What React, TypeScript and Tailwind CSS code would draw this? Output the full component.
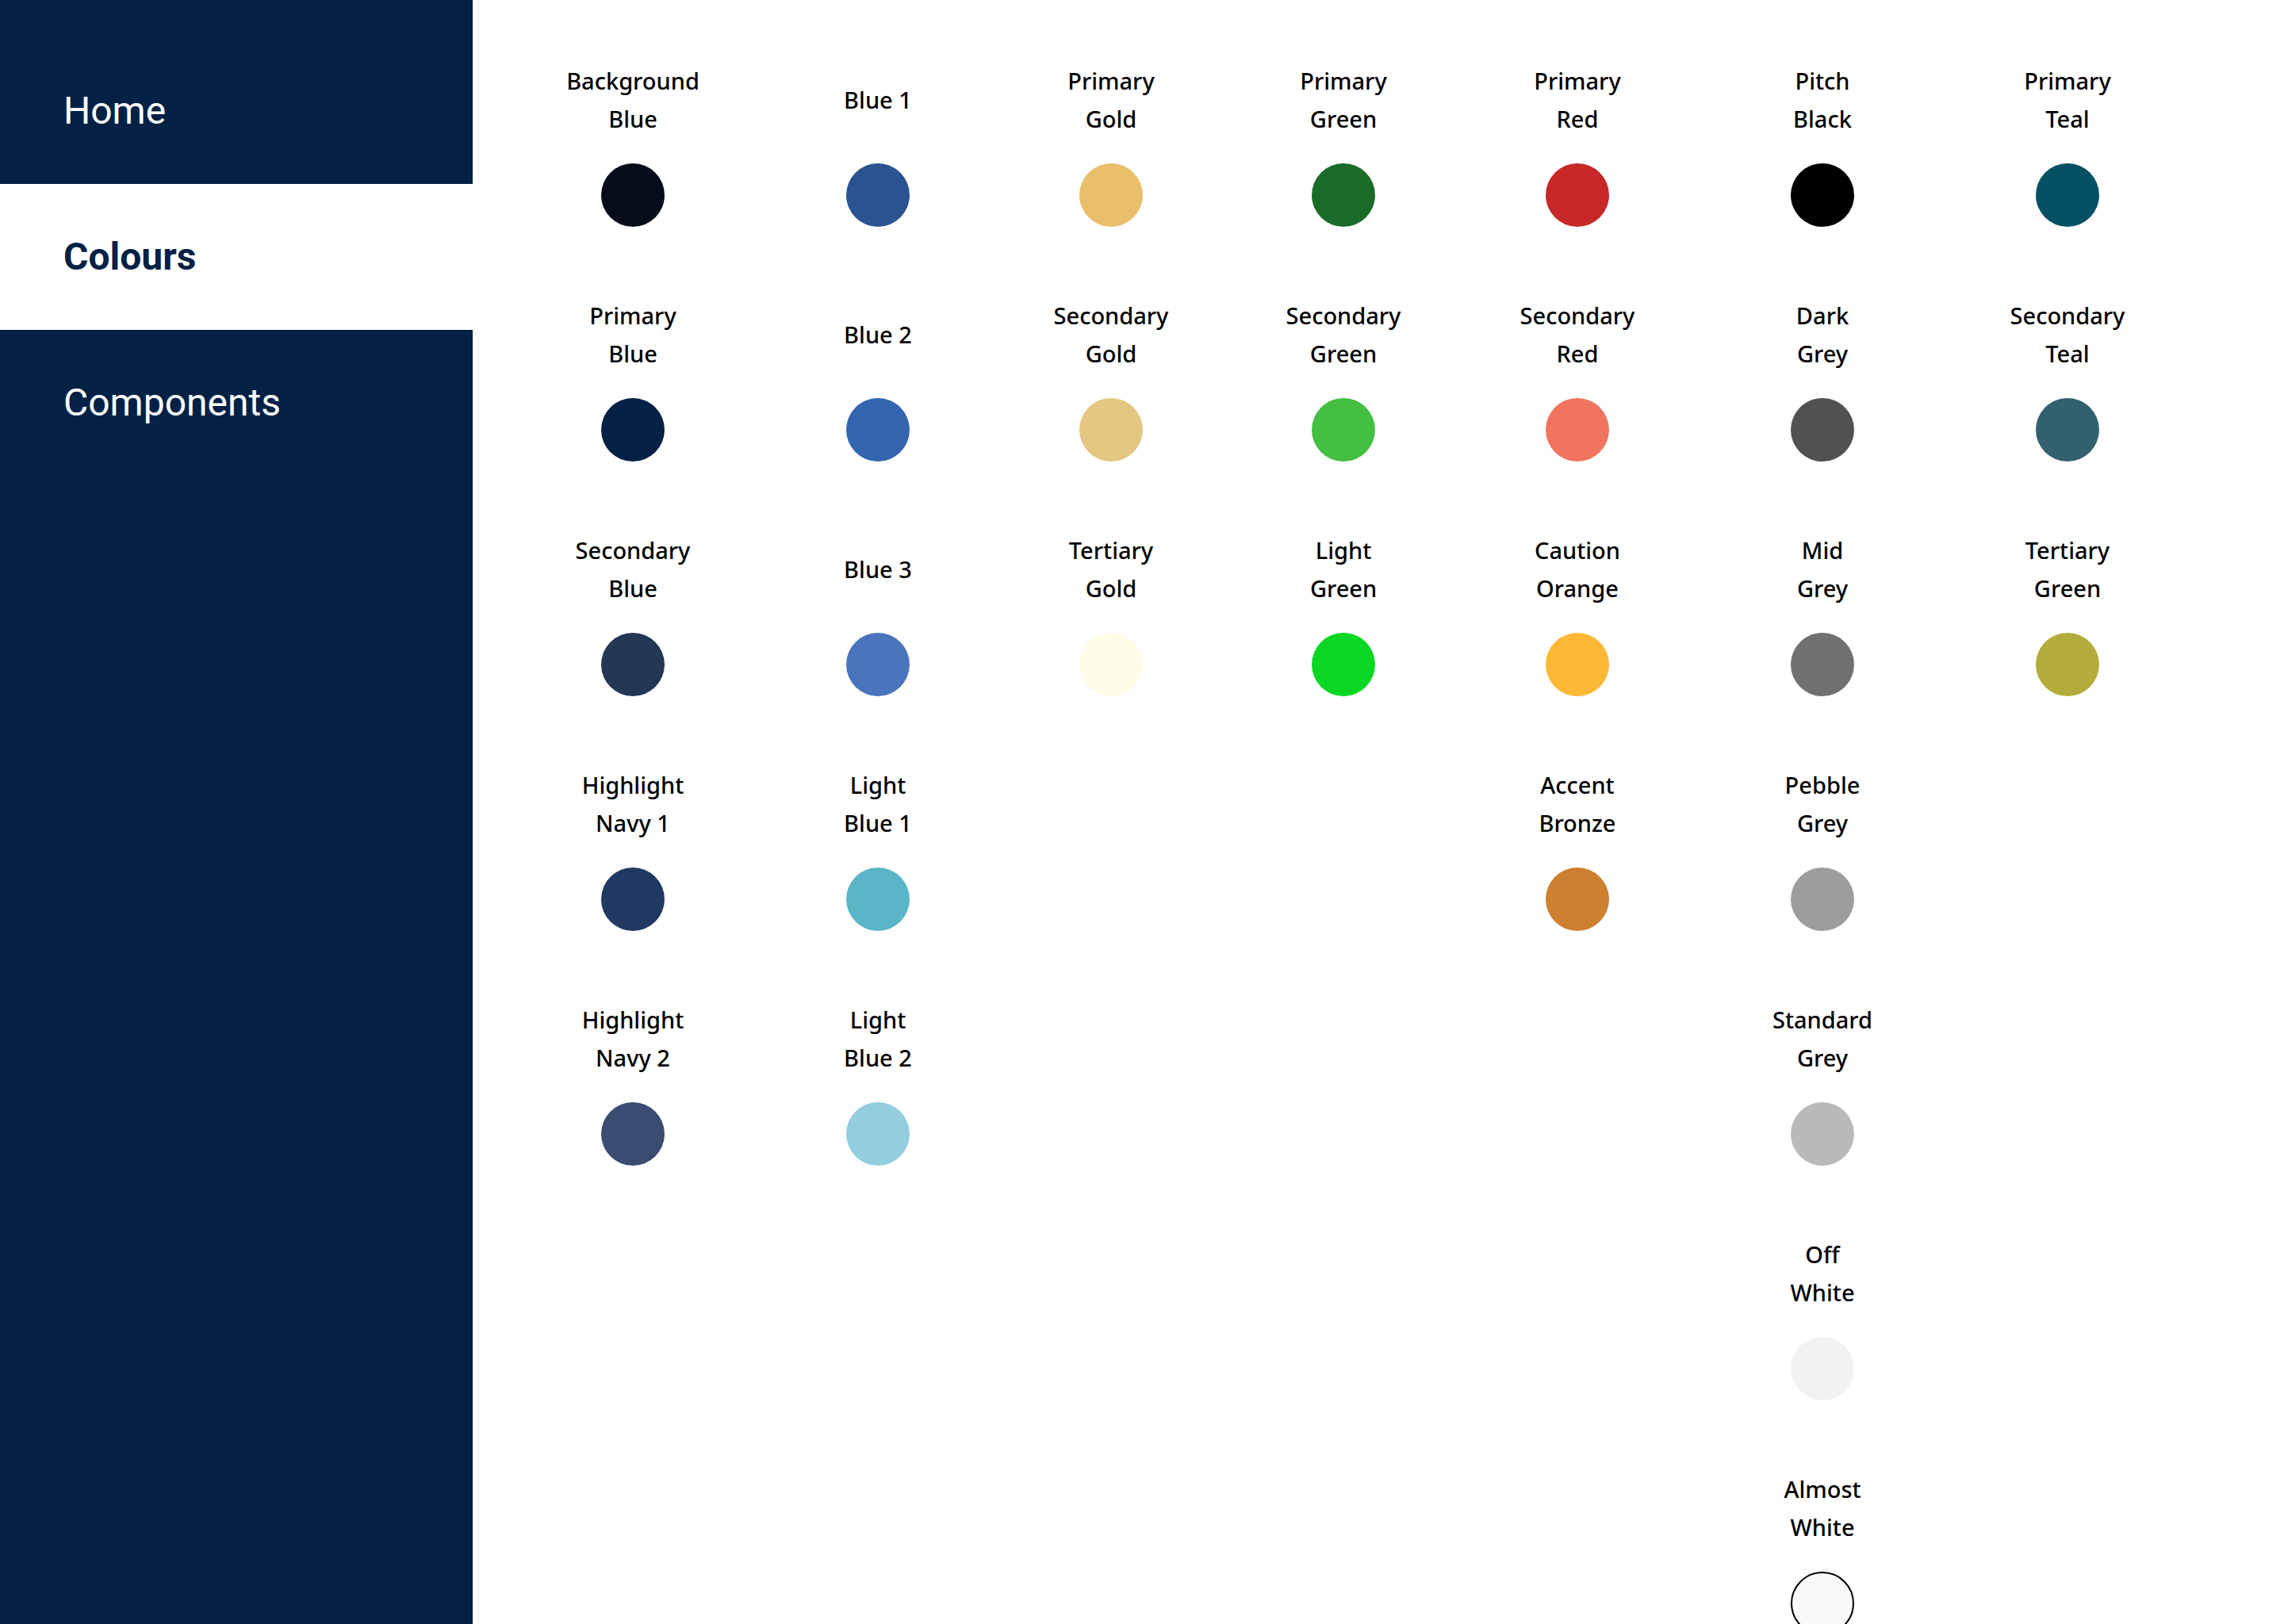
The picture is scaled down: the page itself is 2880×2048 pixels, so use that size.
type Swatch = { name: string; lines: string[]; fill: string };

const s = (first: string, second: string, fill: string): Swatch => ({
  name: `${first} ${second}`.trim(),
  lines: second ? [first, second] : [first],
  fill,
});

const columns: Swatch[][] = [
  [
    s('Background', 'Blue', 'bg-[#060d18]'),
    s('Primary', 'Blue', 'bg-[#022145]'),
    s('Secondary', 'Blue', 'bg-[#233755]'),
    s('Highlight', 'Navy 1', 'bg-[#1f3963]'),
    s('Highlight', 'Navy 2', 'bg-[#3b4c72]'),
  ],
  [
    s('Blue 1', '', 'bg-[#2a5390]'),
    s('Blue 2', '', 'bg-[#3364af]'),
    s('Blue 3', '', 'bg-[#4a74bc]'),
    s('Light', 'Blue 1', 'bg-[#5ab5c7]'),
    s('Light', 'Blue 2', 'bg-[#92cede]'),
  ],
  [
    s('Primary', 'Gold', 'bg-[#e8bf6a]'),
    s('Secondary', 'Gold', 'bg-[#e5c682]'),
    s('Tertiary', 'Gold', 'bg-[#fffce8]'),
  ],
  [
    s('Primary', 'Green', 'bg-[#1a6a29]'),
    s('Secondary', 'Green', 'bg-[#43bf41]'),
    s('Light', 'Green', 'bg-[#09d723]'),
  ],
  [
    s('Primary', 'Red', 'bg-[#c62828]'),
    s('Secondary', 'Red', 'bg-[#f1755e]'),
    s('Caution', 'Orange', 'bg-[#ffb835]'),
    s('Accent', 'Bronze', 'bg-[#cc8030]'),
  ],
  [
    s('Pitch', 'Black', 'bg-black'),
    s('Dark', 'Grey', 'bg-[#505152]'),
    s('Mid', 'Grey', 'bg-[#707070]'),
    s('Pebble', 'Grey', 'bg-[#9c9d9f]'),
    s('Standard', 'Grey', 'bg-[#bababa]'),
    s('Off', 'White', 'bg-[#f2f2f2]'),
    s('Almost', 'White', 'bg-[#f9f9f9] border-2 border-black'),
  ],
  [
    s('Primary', 'Teal', 'bg-[#065063]'),
    s('Secondary', 'Teal', 'bg-[#33606f]'),
    s('Tertiary', 'Green', 'bg-[#b2ad3a]'),
  ],
];

const links = [
  { label: 'Home', active: false },
  { label: 'Colours', active: true },
  { label: 'Components', active: false },
];

function Sidebar() {
  return (
    <nav className="w-[596px] shrink-0 bg-[#022145] pt-12 font-['Roboto',sans-serif] text-5xl">
      <ul>
        {links.map(({ label, active }) => (
          <li key={label}>
            <a
              href={`#${label.toLowerCase()}`}
              aria-current={active ? 'page' : undefined}
              className={
                active
                  ? 'flex h-46 items-center bg-white px-20 font-bold text-[#022145]'
                  : 'flex h-46 items-center px-20 text-white'
              }
            >
              {label}
            </a>
          </li>
        ))}
      </ul>
    </nav>
  );
}

function ColourSwatch({ swatch }: { swatch: Swatch }) {
  return (
    <li className="flex flex-col items-center gap-8">
      <p className="flex h-24 flex-col justify-center text-center">
        {swatch.lines.map((line) => (
          <span key={line} className="block">
            {line}
          </span>
        ))}
      </p>
      <div role="img" aria-label={swatch.name} className={`size-20 rounded-full ${swatch.fill}`} />
    </li>
  );
}

export default function App() {
  return (
    <div className="flex h-screen overflow-hidden bg-white">
      <Sidebar />
      <main className="grid min-w-0 flex-1 grid-cols-[322fr_296fr_292fr_294fr_296fr_322fr_296fr] overflow-y-auto pt-[78px] pr-[125px] pl-[41px] font-['Noto_Sans',sans-serif] text-[29px] leading-[48px] font-medium text-black [scrollbar-width:none]">
        {columns.map((column) => (
          <ul key={column[0].name} className="flex flex-col gap-22 pb-20">
            {column.map((swatch) => (
              <ColourSwatch key={swatch.name} swatch={swatch} />
            ))}
          </ul>
        ))}
      </main>
    </div>
  );
}
